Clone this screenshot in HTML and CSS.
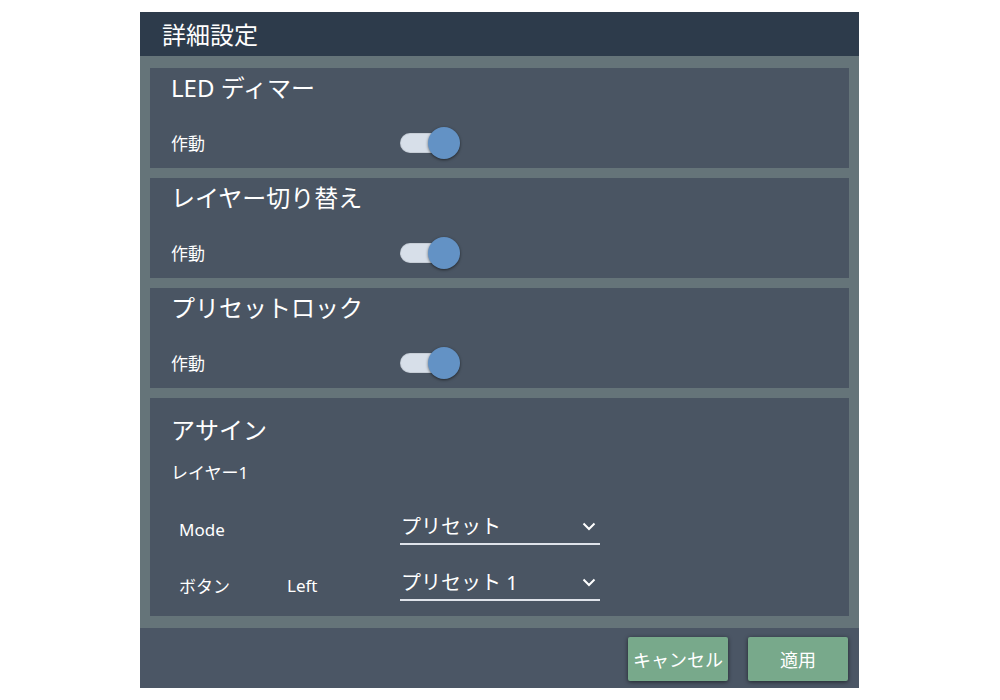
FILE: index.html
```html
<!DOCTYPE html>
<html lang="ja">
<head>
<meta charset="utf-8">
<title>詳細設定</title>
<link rel="stylesheet" href="styles.css">
</head>
<body>
<div class="dialog">
  <div class="header">詳細設定</div>
  <div class="body">
    <section class="panel">
      <div class="panel-title">LED ディマー</div>
      <div class="toggle-row">
        <span class="label">作動</span>
        <span class="toggle"><span class="track"></span><span class="knob"></span></span>
      </div>
    </section>
    <section class="panel">
      <div class="panel-title">レイヤー切り替え</div>
      <div class="toggle-row">
        <span class="label">作動</span>
        <span class="toggle"><span class="track"></span><span class="knob"></span></span>
      </div>
    </section>
    <section class="panel">
      <div class="panel-title">プリセットロック</div>
      <div class="toggle-row">
        <span class="label">作動</span>
        <span class="toggle"><span class="track"></span><span class="knob"></span></span>
      </div>
    </section>
    <section class="panel panel-assign">
      <div class="assign-title">アサイン</div>
      <div class="subtitle">レイヤー1</div>
      <div class="select-row">
        <span class="row-label">Mode</span>
        <span class="row-sub"></span>
        <div class="select"><span>プリセット</span>
          <svg class="chev" width="14" height="9" viewBox="0 0 14 9"><polyline points="1.5,1.5 7,7 12.5,1.5" fill="none" stroke="#ffffff" stroke-width="2"/></svg>
        </div>
      </div>
      <div class="select-row row2">
        <span class="row-label">ボタン</span>
        <span class="row-sub">Left</span>
        <div class="select"><span>プリセット 1</span>
          <svg class="chev" width="14" height="9" viewBox="0 0 14 9"><polyline points="1.5,1.5 7,7 12.5,1.5" fill="none" stroke="#ffffff" stroke-width="2"/></svg>
        </div>
      </div>
    </section>
  </div>
  <div class="footer">
    <button class="btn">キャンセル</button>
    <button class="btn">適用</button>
  </div>
</div>
</body>
</html>
```
FILE: styles.css
```css
* { box-sizing: border-box; }
html, body { margin: 0; padding: 0; background: #ffffff; }
body {
  font-family: "Noto Sans", "Noto Sans CJK JP", sans-serif;
  color: #ffffff;
}
.dialog {
  width: 719px;
  margin: 12px 0 0 140px;
  background: #4a5563;
}
.header {
  height: 44px;
  background: #2d3b4b;
  padding-left: 22px;
  font-size: 24px;
  line-height: 44px;
  font-family: "Noto Sans CJK JP", sans-serif;
}
.body {
  background: #657479;
  padding: 12px 10px;
  display: flex;
  flex-direction: column;
  gap: 10px;
}
.panel {
  background: #4a5563;
  height: 100px;
  padding: 3px 21px 0 21px;
}
.panel-title {
  font-size: 24px;
  line-height: 34px;
}
.toggle-row {
  margin-top: 19px;
  height: 36px;
  display: flex;
  align-items: center;
}
.label {
  width: 229px;
  font-size: 17px;
  font-family: "Noto Sans CJK JP", sans-serif;
}
.toggle {
  position: relative;
  width: 60px;
  height: 32px;
  display: block;
  margin-top: 2px;
}
.track {
  position: absolute;
  left: 0;
  top: 6px;
  width: 46px;
  height: 20px;
  border-radius: 10px;
  background: #d7dfe9;
  box-shadow: inset 0 0 0 1px rgba(0,0,0,0.08);
}
.knob {
  position: absolute;
  left: 28px;
  top: 0;
  width: 32px;
  height: 32px;
  border-radius: 50%;
  background: #6392c5;
  box-shadow: 0 1px 3px rgba(0,0,0,0.55);
}
.panel-assign {
  height: 218px;
  padding-top: 16px;
}
.assign-title {
  font-size: 24px;
  line-height: 32px;
}
.subtitle {
  margin-top: 15px;
  font-size: 17px;
  line-height: 24px;
}
.select-row {
  margin-top: 26px;
  height: 34px;
  padding-left: 8px;
  display: grid;
  grid-template-columns: 108px 113px 200px;
  align-items: center;
}
.select-row.row2 { margin-top: 22px; }
.row-label, .row-sub {
  font-size: 17px;
  padding-top: 3px;
}
.select {
  height: 34px;
  border-bottom: 2px solid #dfe3ea;
  display: flex;
  align-items: center;
  justify-content: space-between;
  padding: 0 4px 0 1px;
  font-size: 20px;
  line-height: 32px;
}
.chev { display: block; margin-top: -2px; }
.footer {
  height: 60px;
  background: #4b5665;
  display: flex;
  justify-content: flex-end;
  align-items: flex-start;
  padding: 9px 11px 0 0;
  gap: 20px;
}
.btn {
  width: 100px;
  height: 44px;
  border: none;
  border-radius: 2px;
  background: #78a98b;
  color: #ffffff;
  font-family: "Noto Sans CJK JP", sans-serif;
  font-size: 18px;
  padding: 0;
  box-shadow: 0 1px 4px rgba(0,0,0,0.55);
}
```
